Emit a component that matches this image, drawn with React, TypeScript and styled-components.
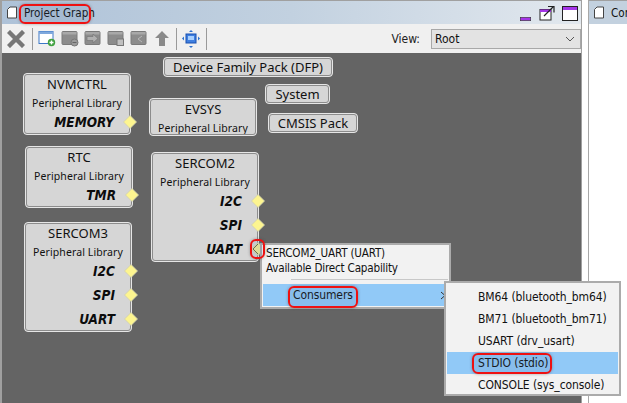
import React from "react";
import styled, { createGlobalStyle } from "styled-components";

const Global = createGlobalStyle`
  html, body { margin: 0; padding: 0; background: #fff; }
  body { font-family: "Noto Sans", "DejaVu Sans", sans-serif; color: #111; }
`;

const UI = `"Noto Sans", "DejaVu Sans", sans-serif`;
const TAHOMA = `"DejaVu Sans", sans-serif`;

const Page = styled.div`
  width: 627px;
  height: 403px;
  overflow: hidden;
  display: flex;
  background: #fff;
  position: relative;
`;
const Window = styled.div`
  width: 582px;
  flex: none;
  box-sizing: border-box;
  border-left: 2px solid #a0a0a0;
  border-right: 1px solid #a0a0a0;
  border-top: 1px solid #a0a0a0;
  display: flex;
  flex-direction: column;
`;
const TitleBar = styled.div`
  height: 23px;
  flex: none;
  display: flex;
  align-items: center;
  padding-left: 4px;
  background: linear-gradient(90deg, #aec2d8 0%, #c2d1e0 50%, #e2e8ee 100%);
  font: 11.6px ${TAHOMA};
  font-stretch: condensed;
`;
const TitleText = styled.span`
  margin-left: 6px;
  color: #111;
`;
const WindowControls = styled.div`
  margin-left: auto;
  margin-right: 3px;
  align-self: flex-end;
  padding-bottom: 3px;
  display: flex;
  align-items: flex-end;
`;
const MinimizeIcon = styled.svg`
  margin-right: 8px;
`;
const DetachIcon = styled.svg`
  margin-right: 6px;
`;
const Toolbar = styled.div`
  height: 29px;
  flex: none;
  background: #f0f0f0;
  display: flex;
  align-items: center;
  padding-left: 5px;
`;
const Sep = styled.div`
  width: 1px;
  height: 22px;
  background: #9a9a9a;
  margin: 0 5px 0 0;
`;
const IconSlot = styled.div<{ $after?: number }>`
  width: 18px;
  height: 18px;
  margin-right: ${(p) => p.$after ?? 5}px;
  display: flex;
  align-items: center;
  justify-content: center;
`;
const ViewLabel = styled.span`
  margin-left: auto;
  margin-right: 11px;
  font: 12px ${TAHOMA};
  font-stretch: condensed;
  color: #222;
`;
const Select = styled.div`
  width: 150px;
  height: 20px;
  box-sizing: border-box;
  border: 1px solid #a8a8a8;
  background: #e3e3e3;
  display: flex;
  align-items: center;
  justify-content: space-between;
  padding: 0 5px 0 3px;
  font: 12px ${TAHOMA};
  font-stretch: condensed;
`;
const Canvas = styled.div`
  flex: 1;
  position: relative;
  background: #646464;
`;
const Node = styled.div<{ $x: number; $y: number; $h: number; $w?: number }>`
  position: absolute;
  left: ${(p) => p.$x}px;
  top: ${(p) => p.$y}px;
  width: ${(p) => p.$w ?? 108}px;
  height: ${(p) => p.$h}px;
  box-sizing: border-box;
  background: #d6d6d6;
  border: 1px solid #e6e6e6;
  outline: 1px solid #8c8c8c;
  outline-offset: -2px;
  border-radius: 4px;
  display: flex;
  flex-direction: column;
  align-items: center;
`;
const NodeTitle = styled.div`
  font: 13px/15px ${UI};
  height: 15px;
  margin-top: 3px;
  color: #111;
`;
const NodeSub = styled.div`
  font: 10.5px/14px ${UI};
  height: 14px;
  margin-top: 4px;
  color: #111;
  letter-spacing: 0.1px;
`;
const Ports = styled.div`
  align-self: stretch;
  display: flex;
  flex-direction: column;
`;
const Port = styled.div`
  height: 24px;
  position: relative;
  display: flex;
  align-items: center;
  justify-content: flex-end;
  padding-right: 16px;
  font: italic 700 13.5px "DejaVu Sans", sans-serif;
  font-stretch: condensed;
  color: #0c0c0c;
`;
const Diamond = styled.svg`
  position: absolute;
  right: -7px;
  top: 5px;
`;
const Tag = styled.div<{ $x: number; $y: number; $w: number }>`
  position: absolute;
  left: ${(p) => p.$x}px;
  top: ${(p) => p.$y}px;
  width: ${(p) => p.$w}px;
  height: 20px;
  box-sizing: border-box;
  background: #d6d6d6;
  border: 1px solid #e6e6e6;
  outline: 1px solid #8c8c8c;
  outline-offset: -2px;
  border-radius: 4px;
  display: flex;
  align-items: center;
  justify-content: center;
  font: 13px ${UI};
  color: #111;
`;
const RightPanel = styled.div`
  margin-left: 6px;
  flex: 1;
  min-width: 0;
  border-left: 1px solid #a8a8a8;
  border-top: 1px solid #a0a0a0;
`;
const RightTitle = styled.div`
  height: 23px;
  background: #c3d1df;
  display: flex;
  align-items: center;
  padding-left: 4px;
  gap: 6px;
  font: 11.6px ${TAHOMA};
  font-stretch: condensed;
  white-space: nowrap;
`;
const Menu = styled.div<{ $x: number; $y: number; $w: number; $h: number }>`
  position: absolute;
  left: ${(p) => p.$x}px;
  top: ${(p) => p.$y}px;
  width: ${(p) => p.$w}px;
  height: ${(p) => p.$h}px;
  box-sizing: border-box;
  background: #f2f2f2;
  border: 2px solid #ababab;
  font: 12px ${TAHOMA};
  font-stretch: condensed;
  color: #111;
`;
const MenuInfo = styled.div`
  padding: 1px 0 0 4px;
  font-size: 11.6px;
  letter-spacing: -0.2px;
  line-height: 14px;
  white-space: nowrap;
`;
const MenuDivider = styled.div`
  height: 1px;
  background: #c8c8c8;
  margin: 4px 1px 0 29px;
`;
const MenuRow = styled.div<{ $active?: boolean; $pad: number }>`
  height: 22px;
  display: flex;
  align-items: center;
  padding-left: ${(p) => p.$pad}px;
  position: relative;
  white-space: nowrap;
  letter-spacing: -0.1px;
  background: ${(p) => (p.$active ? "#91c9f7" : "transparent")};
`;
const Consumers = styled(MenuRow)`
  margin: 4px 0 0 1px;
`;
const SubList = styled.div`
  padding: 3px 1px 0;
`;
const Chevron = styled.svg`
  position: absolute;
  right: 3px;
  top: 7px;
`;
const Callout = styled.div<{ $x: number; $y: number; $w: number; $h: number; $r: number }>`
  position: absolute;
  left: ${(p) => p.$x}px;
  top: ${(p) => p.$y}px;
  width: ${(p) => p.$w}px;
  height: ${(p) => p.$h}px;
  box-sizing: border-box;
  border: 2px solid #ee1111;
  border-radius: ${(p) => p.$r}px;
  box-shadow: 0 0 3px rgba(60, 60, 60, 0.45);
  background: rgba(70, 110, 160, 0.12);
  pointer-events: none;
`;
const PageGlyph = styled.svg`
  flex: none;
`;

const PageIcon = () => (
  <PageGlyph width="12" height="13" viewBox="0 0 12 13">
    <path d="M1.5 3.5 L4 1 H10.5 V12 H1.5 Z" fill="#fff" stroke="#444" strokeWidth="1" />
  </PageGlyph>
);

const PortDiamond: React.FC<{ selected?: boolean }> = ({ selected }) => (
  <Diamond width="14" height="14" viewBox="0 0 14 14">
    <path d="M7 0.5 L13.5 7 L7 13.5 L0.5 7 Z" fill={selected ? "#f4ec98" : "#fdf590"} stroke="#cfcfb0" strokeWidth="0.8" />
    {selected && <path d="M7 2 L2 7 L7 12" fill="none" stroke="#6a6a50" strokeWidth="1" />}
  </Diamond>
);

const Close = () => (
  <svg width="18" height="18" viewBox="0 0 18 18">
    <path d="M3 3 L15 15 M15 3 L3 15" stroke="#777" strokeWidth="4.4" strokeLinecap="square" />
  </svg>
);

const GreyWin: React.FC<{ children?: React.ReactNode }> = ({ children }) => (
  <svg width="18" height="17" viewBox="0 0 18 17">
    <rect x="1" y="1.5" width="15" height="13" rx="1" fill="#8c8c8c" stroke="#7a7a7a" />
    <rect x="1.5" y="2" width="14" height="2.5" fill="#a8a8a8" />
    {children}
  </svg>
);

const AddWin = () => (
  <svg width="18" height="17" viewBox="0 0 18 17">
    <rect x="1" y="1.5" width="14" height="12" fill="#fff" stroke="#3c78c8" />
    <rect x="1" y="1.5" width="14" height="2.5" fill="#7fa8dc" />
    <circle cx="13.5" cy="12.5" r="3.7" fill="#3fa03f" />
    <path d="M11.5 12.5 H15.5 M13.5 10.5 V14.5" stroke="#fff" strokeWidth="1.4" />
  </svg>
);

const UpArrow = () => (
  <svg width="16" height="17" viewBox="0 0 16 17">
    <path d="M8 1 L15 8 H11 V16 H5 V8 H1 Z" fill="#8a8a8a" />
  </svg>
);

const Fit = () => (
  <svg width="18" height="18" viewBox="0 0 18 18">
    <rect x="4" y="4" width="10" height="9" fill="#3f7fe0" stroke="#1a50b0" />
    <rect x="6" y="6" width="6" height="4" fill="#a8d0ff" />
    <path d="M9 0 L11 2 H7 Z M9 18 L7 16 H11 Z M0 8.5 L2 6.5 V10.5 Z M18 8.5 L16 10.5 V6.5 Z" fill="#2a70d0" />
  </svg>
);

const Minimize = () => (
  <MinimizeIcon width="11" height="4" viewBox="0 0 11 4">
    <rect x="0.3" y="0.3" width="10.4" height="3.4" fill="#a535e8" stroke="#333" strokeWidth="0.6" />
  </MinimizeIcon>
);
const Detach = () => (
  <DetachIcon width="17" height="16" viewBox="0 0 17 16">
    <rect x="1" y="4.5" width="11" height="10.5" fill="#fff" stroke="#222" />
    <rect x="1" y="4.5" width="11" height="2.5" fill="#a535e8" />
    <path d="M5 11 L14 2 M9 1.5 H15 V7.5" fill="none" stroke="#222" strokeWidth="1.2" />
  </DetachIcon>
);
const Maximize = () => (
  <svg width="16" height="15" viewBox="0 0 16 15">
    <rect x="0.5" y="0.5" width="15" height="14" fill="#fff" stroke="#222" />
    <rect x="1" y="1" width="14" height="3" fill="#a535e8" />
  </svg>
);

const nodes = [
  { t: "NVMCTRL", x: 21, y: 20, h: 62, ports: ["MEMORY"] },
  { t: "EVSYS", x: 147, y: 45, h: 38, ports: [] },
  { t: "RTC", x: 23, y: 93, h: 62, ports: ["TMR"] },
  { t: "SERCOM2", x: 149, y: 99, h: 110, ports: ["I2C", "SPI", "UART"] },
  { t: "SERCOM3", x: 22, y: 169, h: 110, ports: ["I2C", "SPI", "UART"] },
];

const subItems = [
  "BM64 (bluetooth_bm64)",
  "BM71 (bluetooth_bm71)",
  "USART (drv_usart)",
  "STDIO (stdio)",
  "CONSOLE (sys_console)",
];

export default function App() {
  return (
    <Page>
      <Global />
      <Window>
        <TitleBar>
          <PageIcon />
          <TitleText>Project Graph</TitleText>
          <WindowControls>
            <Minimize />
            <Detach />
            <Maximize />
          </WindowControls>
        </TitleBar>
        <Toolbar>
          <IconSlot $after={7}><Close /></IconSlot>
          <Sep />
          <IconSlot><AddWin /></IconSlot>
          <IconSlot>
            <GreyWin>
              <circle cx="13.5" cy="12.5" r="3.5" fill="#9a9a9a" stroke="#777" />
              <path d="M11.5 12.5 H15.5" stroke="#666" />
            </GreyWin>
          </IconSlot>
          <IconSlot>
            <GreyWin>
              <path d="M3 6.5 H9 V4 L14 8.5 L9 13 V10.5 H3 Z" fill="#b0b0b0" stroke="#777" strokeWidth="0.7" />
            </GreyWin>
          </IconSlot>
          <IconSlot>
            <GreyWin>
              <rect x="10" y="9" width="6.5" height="6.5" fill="#c0c0c0" stroke="#777" />
            </GreyWin>
          </IconSlot>
          <IconSlot>
            <GreyWin>
              <path d="M12 6 L8 9 L12 12" fill="none" stroke="#b8b8b8" />
            </GreyWin>
          </IconSlot>
          <IconSlot><UpArrow /></IconSlot>
          <Sep />
          <IconSlot $after={6}><Fit /></IconSlot>
          <Sep />
          <ViewLabel>View:</ViewLabel>
          <Select>
            Root
            <svg width="10" height="6" viewBox="0 0 10 6">
              <path d="M1 1 L5 5 L9 1" fill="none" stroke="#555" />
            </svg>
          </Select>
        </Toolbar>
        <Canvas>
          <Tag $x={161} $y={4} $w={170}>Device Family Pack (DFP)</Tag>
          <Tag $x={263} $y={31} $w={65}>System</Tag>
          <Tag $x={266} $y={60} $w={90}>CMSIS Pack</Tag>
          {nodes.map((n) => (
            <Node key={n.t} $x={n.x} $y={n.y} $h={n.h}>
              <NodeTitle>{n.t}</NodeTitle>
              <NodeSub>Peripheral Library</NodeSub>
              {n.ports.length > 0 && (
                <Ports>
                  {n.ports.map((p) => (
                    <Port key={p}>
                      {p}
                      <PortDiamond selected={n.t === "SERCOM2" && p === "UART"} />
                    </Port>
                  ))}
                </Ports>
              )}
            </Node>
          ))}
          <Menu $x={258} $y={190} $w={191} $h={66}>
            <MenuInfo>SERCOM2_UART (UART)</MenuInfo>
            <MenuInfo>Available Direct Capability</MenuInfo>
            <MenuDivider />
            <Consumers $active $pad={30}>
              Consumers
              <Chevron width="6" height="9" viewBox="0 0 6 9">
                <path d="M1 1 L5 4.5 L1 8" fill="none" stroke="#333" />
              </Chevron>
            </Consumers>
          </Menu>
          <Menu $x={442} $y={228} $w={177} $h={115}>
            <SubList>
              {subItems.map((s) => (
                <MenuRow key={s} $pad={31} $active={s.startsWith("STDIO")}>
                  {s}
                </MenuRow>
              ))}
            </SubList>
          </Menu>
        </Canvas>
      </Window>
      <RightPanel>
        <RightTitle>
          <PageIcon />
          Con
        </RightTitle>
      </RightPanel>
      <Callout $x={19} $y={4} $w={72} $h={20} $r={6} />
      <Callout $x={250} $y={239} $w={15} $h={20} $r={6} />
      <Callout $x={288} $y={286} $w={70} $h={22} $r={6} />
      <Callout $x={472} $y={353} $w={80} $h={21} $r={6} />
    </Page>
  );
}
